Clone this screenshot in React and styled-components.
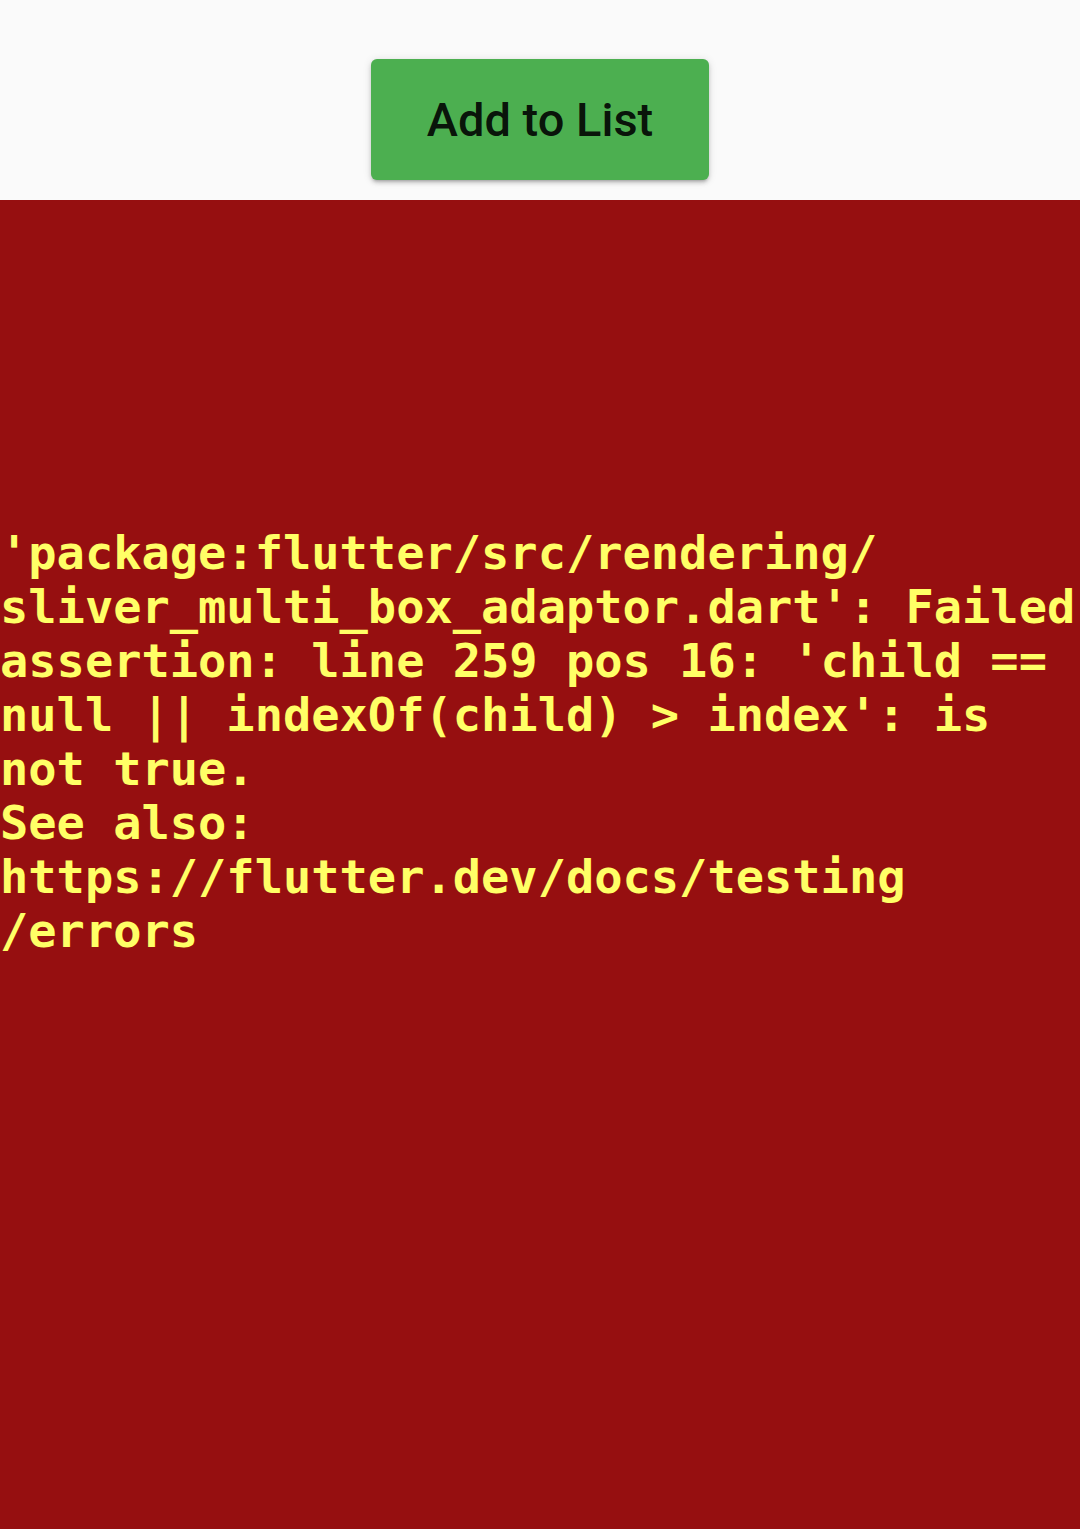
import styled, { createGlobalStyle } from 'styled-components'

const GlobalStyle = createGlobalStyle`
  html, body {
    margin: 0;
    padding: 0;
    background: #fafafa;
  }
  #root {
    min-height: 100vh;
    display: flex;
    flex-direction: column;
  }
`

const errorLines = [
  "'package:flutter/src/rendering/",
  "sliver_multi_box_adaptor.dart': Failed",
  "assertion: line 259 pos 16: 'child ==",
  "null || indexOf(child) > index': is",
  'not true.',
  'See also:',
  'https://flutter.dev/docs/testing',
  '/errors',
]

const App = () => {
  return (
    <Page>
      <GlobalStyle />
      <Header>
        <AddButton type="button">Add to List</AddButton>
      </Header>
      <ErrorPanel>
        <ErrorText>
          {errorLines.map((line, i) => (
            <Line key={i}>{line}</Line>
          ))}
        </ErrorText>
      </ErrorPanel>
    </Page>
  )
}

export default App

const Page = styled.div`
width: 1080px;
min-height: 1529px;
display: flex;
flex-direction: column;
`
const Header = styled.div`
height: 200px;
box-sizing: border-box;
padding-top: 59px;
display: flex;
justify-content: center;
align-items: flex-start;
background: #fafafa;
`
const AddButton = styled.button`
width: 338px;
height: 121px;
border: none;
border-radius: 6px;
background: #4caf50;
color: rgba(0, 0, 0, 0.9);
font-family: Roboto, "Liberation Sans", sans-serif;
font-size: 47px;
font-weight: 500;
padding: 0;
box-shadow: 0 3px 3px -2px rgba(0, 0, 0, 0.2), 0 3px 4px 0 rgba(0, 0, 0, 0.14), 0 1px 8px 0 rgba(0, 0, 0, 0.12);
cursor: pointer;
`
const ErrorPanel = styled.div`
flex: 1;
background: #960f10;
padding-top: 326px;
`
const ErrorText = styled.div`
font-family: "DejaVu Sans Mono", "Liberation Mono", monospace;
font-size: 47px;
font-weight: 700;
line-height: 54px;
color: #ffff66;
white-space: pre;
`
const Line = styled.div`
`
